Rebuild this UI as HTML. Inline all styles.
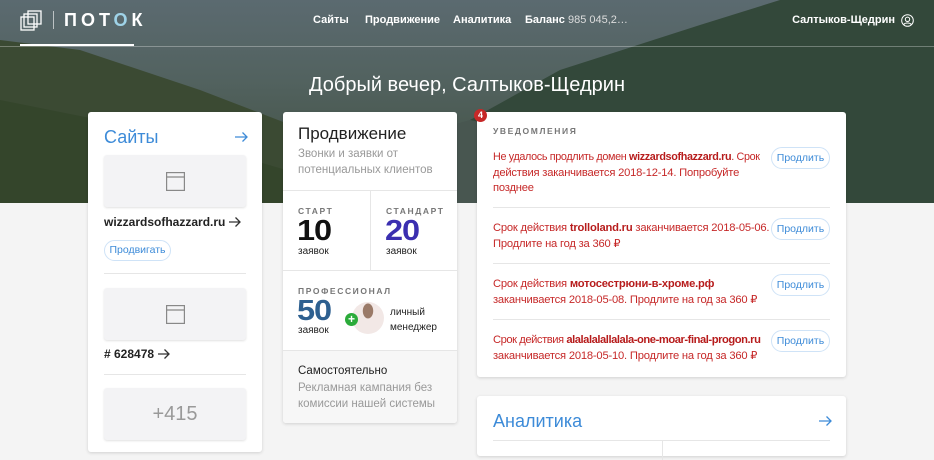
<!DOCTYPE html>
<html><head><meta charset="utf-8"><style>
*{box-sizing:border-box;margin:0;padding:0}
body{width:934px;height:446px;overflow:hidden;background:#f4f4f4;font-family:"Liberation Sans","Noto Sans CJK SC",sans-serif;position:relative}
.hero{position:absolute;left:0;top:0;width:934px;height:203px;background:linear-gradient(180deg,#5b6a70 0%,#52625f 40%,#3d4c3c 100%);overflow:hidden}
.a{position:absolute}
.card{position:absolute;background:#fff;border-radius:3px;box-shadow:0 1px 3px rgba(0,0,0,.15)}
.nav{position:absolute;top:14px;color:#fff;font-size:11px;font-weight:bold;white-space:nowrap}
.thumb{position:absolute;left:16px;width:142px;height:52px;background:#f3f3f5;border-radius:3px;box-shadow:0 1px 2px rgba(0,0,0,.12)}
.lbl{position:absolute;font-size:8.5px;letter-spacing:1.6px;color:#777;font-weight:bold;white-space:nowrap}
.big{position:absolute;font-size:29px;font-weight:900;letter-spacing:-1px;transform:scaleX(1.12);transform-origin:left}
.z{position:absolute;font-size:10px;color:#222}
.n{position:absolute;left:16px;white-space:nowrap;font-size:11.2px;letter-spacing:-0.2px;line-height:15.5px;color:#c62828}
.n b{color:#b71c1c}
.btn{position:absolute;left:294px;width:59px;height:22px;border:1px solid #cfe3f7;border-radius:11px;color:#3d8bd8;font-size:10.5px;text-align:center;line-height:20px;background:#fff}
.hr{position:absolute;height:1px;background:#e6e6e6}
.ar{position:absolute}
.ia{display:inline-block;vertical-align:-1px;margin-left:4px}
</style></head><body>
<div class="hero">
<svg class="a" style="left:0;top:0" width="934" height="203">
<polygon points="0,40 80,50 200,90 330,140 420,200 0,203" fill="#3b4a33"/>
<polygon points="0,100 150,130 320,180 400,203 0,203" fill="#34452b"/>
<polygon points="560,70 700,25 780,0 934,0 934,203 500,203 470,120" fill="#33483a"/>
<polygon points="400,140 470,120 520,130 560,203 380,203" fill="#485650"/>
</svg>
<div class="a" style="left:0;top:46px;width:934px;height:1px;background:rgba(255,255,255,.3)"></div>
<div class="a" style="left:20px;top:44px;width:114px;height:2px;background:#fff"></div>
<svg class="a" style="left:20px;top:10px" width="24" height="22" fill="none" stroke="#fff" stroke-width="1.3"><rect x="1" y="7" width="13" height="13"/><rect x="4" y="4" width="13" height="13"/><rect x="8" y="1" width="13" height="13"/></svg>
<div class="a" style="left:53px;top:11px;width:1px;height:18px;background:rgba(255,255,255,.6)"></div>
<div class="a" style="left:64px;top:10px;color:#fff;font-size:18px;font-weight:bold;letter-spacing:4px">ПОТ<span style="color:#9fd3e8">О</span>К</div>
<div class="nav" style="left:313px">Сайты</div>
<div class="nav" style="left:365px">Продвижение</div>
<div class="nav" style="left:453px">Аналитика</div>
<div class="nav" style="left:525px">Баланс <span style="font-weight:normal;color:#ddd">985 045,2…</span></div>
<div class="nav" style="right:39px">Салтыков-Щедрин</div>
<svg class="a" style="left:901px;top:14px" width="13" height="13" fill="none" stroke="#fff" stroke-width="1"><circle cx="6.5" cy="6.5" r="5.8"/><circle cx="6.5" cy="5.3" r="2.2"/><path d="M2.8 10.5c1-2 6.4-2 7.4 0"/></svg>
<div class="a" style="left:0;width:934px;top:74px;text-align:center;color:#fff;font-size:20px">Добрый вечер, Салтыков-Щедрин</div>
</div>

<div class="card" style="left:88px;top:112px;width:174px;height:340px">
<div class="a" style="left:16px;top:15px;font-size:18px;color:#3d8bd8">Сайты</div>
<svg class="ar" style="left:147px;top:20px" width="13" height="10" fill="none" stroke="#3d8bd8" stroke-width="1.3"><path d="M0 5h12M7.5 .5L12 5 7.5 9.5"/></svg>
<div class="thumb" style="top:43px"><svg class="a" style="left:62px;top:17px" width="19" height="19" fill="none" stroke="#888" stroke-width="1.2"><rect x=".6" y=".6" width="17.8" height="17.8"/><line x1="0" y1="5" x2="19" y2="5"/></svg></div>
<div class="a" style="left:16px;top:103px;font-size:12px;font-weight:bold;color:#222;white-space:nowrap">wizzardsofhazzard.ru<svg class="ia" width="12" height="10" fill="none" stroke="#333" stroke-width="1.3"><path d="M0 5h11M6.5 .5L11 5 6.5 9.5"/></svg></div>
<div class="a" style="left:16px;top:128px;width:67px;height:21px;border:1px solid #cfe3f7;border-radius:11px;color:#3d8bd8;font-size:10.5px;text-align:center;line-height:19px">Продвигать</div>
<div class="hr" style="left:16px;top:161px;width:142px"></div>
<div class="thumb" style="top:176px"><svg class="a" style="left:62px;top:17px" width="19" height="19" fill="none" stroke="#888" stroke-width="1.2"><rect x=".6" y=".6" width="17.8" height="17.8"/><line x1="0" y1="5" x2="19" y2="5"/></svg></div>
<div class="a" style="left:16px;top:235px;font-size:12px;font-weight:bold;color:#222;white-space:nowrap"># 628478<svg class="ia" width="12" height="10" fill="none" stroke="#333" stroke-width="1.3"><path d="M0 5h11M6.5 .5L11 5 6.5 9.5"/></svg></div>
<div class="hr" style="left:16px;top:262px;width:142px"></div>
<div class="thumb" style="top:276px;text-align:center;line-height:52px;font-size:20px;color:#999">+415</div>
</div>

<div class="card" style="left:283px;top:112px;width:174px;height:311px;overflow:hidden">
<div class="a" style="left:15px;top:12px;font-size:17px;color:#222">Продвижение</div>
<div class="a" style="left:15px;top:34px;font-size:11.5px;line-height:16px;color:#999">Звонки и заявки от<br>потенциальных клиентов</div>
<div class="hr" style="left:0;top:78px;width:174px"></div>
<div class="a" style="left:87px;top:78px;width:1px;height:80px;background:#e6e6e6"></div>
<div class="lbl" style="left:15px;top:94px">СТАРТ</div>
<div class="big" style="left:14px;top:103px;color:#111">10</div>
<div class="z" style="left:15px;top:134px">заявок</div>
<div class="lbl" style="left:103px;top:94px">СТАНДАРТ</div>
<div class="big" style="left:102px;top:103px;color:#3b2fb0">20</div>
<div class="z" style="left:103px;top:134px">заявок</div>
<div class="hr" style="left:0;top:158px;width:174px"></div>
<div class="lbl" style="left:15px;top:174px">ПРОФЕССИОНАЛ</div>
<div class="big" style="left:14px;top:183px;color:#2e6090">50</div>
<div class="z" style="left:15px;top:213px">заявок</div>
<div class="a" style="left:69px;top:190px;width:32px;height:32px;border-radius:50%;background:radial-gradient(ellipse at 50% 28%,#9a7a68 0 22%,#f2e8e6 24%)"></div>
<div class="a" style="left:62px;top:201px;width:13px;height:13px;border-radius:50%;background:#2bab3a;color:#fff;font-size:12px;font-weight:bold;text-align:center;line-height:13px">+</div>
<div class="a" style="left:107px;top:193px;font-size:10px;line-height:15px;color:#222">личный<br>менеджер</div>
<div class="a" style="left:0;top:238px;width:174px;height:73px;background:#f7f7f7;border-top:1px solid #e6e6e6"></div>
<div class="a" style="left:15px;top:253px;font-size:11.5px;color:#222">Самостоятельно</div>
<div class="a" style="left:15px;top:268px;font-size:11.5px;line-height:16px;color:#999">Рекламная кампания без<br>комиссии нашей системы</div>
</div>

<div class="card" style="left:477px;top:112px;width:369px;height:265px">
<div class="lbl" style="left:16px;top:14px">УВЕДОМЛЕНИЯ</div>
<div class="n" style="top:38px"><span style="font-size:10.8px;letter-spacing:-0.35px">Не удалось продлить домен <b>wizzardsofhazzard.ru</b>. Срок</span><br>действия заканчивается 2018-12-14. Попробуйте<br>позднее</div>
<div class="btn" style="top:35px">Продлить</div>
<div class="hr" style="left:16px;top:95px;width:337px"></div>
<div class="n" style="top:109px">Срок действия <b>trolloland.ru</b> заканчивается 2018-05-06.<br>Продлите на год за 360 ₽</div>
<div class="btn" style="top:106px">Продлить</div>
<div class="hr" style="left:16px;top:151px;width:337px"></div>
<div class="n" style="top:165px">Срок действия <b>мотосестрюни-в-хроме.рф</b><br>заканчивается 2018-05-08. Продлите на год за 360 ₽</div>
<div class="btn" style="top:162px">Продлить</div>
<div class="hr" style="left:16px;top:207px;width:337px"></div>
<div class="n" style="top:221px;letter-spacing:-0.45px">Срок действия <b>alalalalallalala-one-moar-final-progon.ru</b><br><span style="letter-spacing:-0.2px">заканчивается 2018-05-10. Продлите на год за 360 ₽</span></div>
<div class="btn" style="top:218px">Продлить</div>
</div>
<div class="a" style="left:474px;top:109px;width:13px;height:13px;border-radius:50%;background:#c62828;color:#fff;font-size:9px;font-weight:bold;text-align:center;line-height:13px">4</div>

<div class="card" style="left:477px;top:396px;width:369px;height:60px">
<div class="a" style="left:16px;top:15px;font-size:18px;color:#3d8bd8">Аналитика</div>
<svg class="ar" style="left:342px;top:20px" width="13" height="10" fill="none" stroke="#3d8bd8" stroke-width="1.3"><path d="M0 5h12M7.5 .5L12 5 7.5 9.5"/></svg>
<div class="hr" style="left:16px;top:44px;width:337px"></div>
<div class="a" style="left:185px;top:44px;width:1px;height:20px;background:#e6e6e6"></div>
</div>
</body></html>
